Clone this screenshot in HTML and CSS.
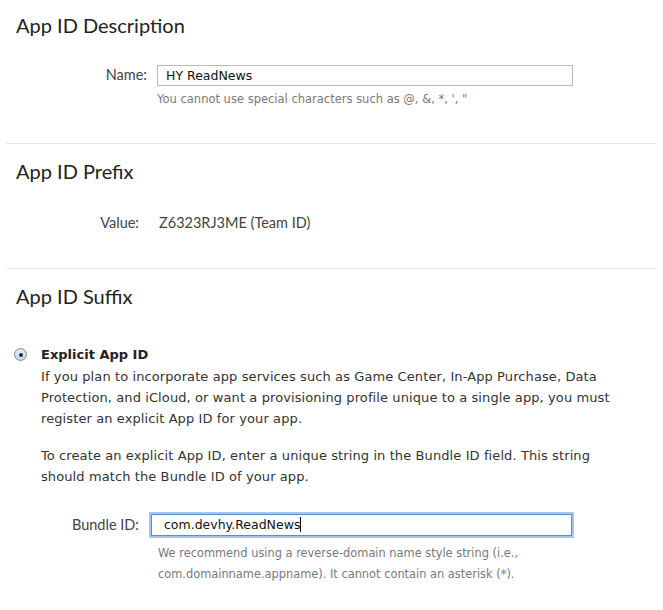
FILE: index.html
```html
<!DOCTYPE html>
<html>
<head>
<meta charset="utf-8">
<link rel="stylesheet" href="styles.css">
</head>
<body>
<div class="page">
  <section class="section s1">
    <h2 class="title">App ID Description</h2>
    <div class="field">
      <label class="label name-label">Name:</label>
      <div class="control">
        <div class="input name-input">HY ReadNews</div>
        <p class="help">You cannot use special characters such as @, &amp;, *, ', "</p>
      </div>
    </div>
  </section>
  <section class="section s2">
    <h2 class="title">App ID Prefix</h2>
    <div class="field value-row">
      <span class="label value-label">Value:</span>
      <span class="value">Z6323RJ3ME (Team ID)</span>
    </div>
  </section>
  <section class="section s3 last">
    <h2 class="title">App ID Suffix</h2>
    <div class="option">
      <span class="radio"><span class="dot"></span></span>
      <div class="option-body">
        <div class="option-title">Explicit App ID</div>
        <p class="para">If you plan to incorporate app services such as Game Center, In-App Purchase, Data Protection, and iCloud, or want a provisioning profile unique to a single app, you must register an explicit App ID for your app.</p>
        <p class="para">To create an explicit App ID, enter a unique string in the Bundle ID field. This string should match the Bundle ID of your app.</p>
        <div class="field bundle">
          <label class="label bundle-label">Bundle ID:</label>
          <div class="control">
            <div class="input bundle-input">com.devhy.ReadNews<span class="caret"></span></div>
            <p class="help help2">We recommend using a reverse-domain name style string (i.e., com.domainname.appname). It cannot contain an asterisk (*).</p>
          </div>
        </div>
      </div>
    </div>
  </section>
</div>
</body>
</html>
```
FILE: styles.css
```css
html, body { margin: 0; padding: 0; background: #fff; }
body { width: 663px; height: 610px; overflow: hidden; color: #333; font-family: "DejaVu Sans", sans-serif; }
.page { padding: 0 8px 0 6px; }
.section { border-bottom: 1px solid #e4e4e4; }
.section.last { border-bottom: none; }
.title { margin: 0; padding-left: 10px; font-family: "Lato", sans-serif; font-weight: 400; font-size: 20px; line-height: 24px; color: #222; }
.s1 .title { padding-top: 13px; }
.s2 .title { padding-top: 15px; }
.s3 .title { padding-top: 15px; }
.s1 { height: 143px; }
.s2 { height: 124px; }
.field { display: flex; align-items: flex-start; }
.label { font-family: "Lato", sans-serif; font-size: 14.5px; color: #444; text-align: right; }
.s1 .field { margin-top: 28px; }
.name-label { width: 141px; line-height: 19px; padding-right: 10px; }
.control { display: flex; flex-direction: column; }
.input { box-sizing: border-box; border: 1px solid #b9b9b9; background: #fff; font-size: 12.5px; color: #111; padding: 0 8px; }
.name-input { width: 416px; height: 21px; line-height: 19px; }
.help { margin: 0; font-size: 11.5px; color: #7a7a7a; line-height: 21px; padding-top: 3px; }
.value-row { margin-top: 30px; }
.value-label { width: 133px; padding-right: 20px; line-height: 20px; }
.value { font-family: "Lato", sans-serif; font-size: 14.5px; color: #444; line-height: 20px; }
.option { display: flex; margin-top: 35px; padding-left: 8px; }
.radio { box-sizing: border-box; width: 13px; height: 13px; border-radius: 50%; border: 1px solid #7d8fa8; background: radial-gradient(circle at 50% 35%, #eaf2fb, #b8cce4); margin-top: 5px; margin-right: 14px; display: flex; align-items: center; justify-content: center; flex: none; }
.dot { width: 4px; height: 4px; border-radius: 50%; background: #1c2a3c; }
.option-body { width: 595px; }
.option-title { font-weight: bold; font-size: 13px; line-height: 23px; color: #222; }
.para { margin: 0 0 16px 0; font-size: 13px; letter-spacing: 0.1px; line-height: 21px; color: #333; }
.bundle { margin-top: 27px; margin-left: 0; }
.bundle-label { width: 98px; line-height: 22px; padding-right: 12px; }
.bundle-input { width: 421px; height: 22px; line-height: 20px; border: 1px solid #5f8cc4; box-shadow: 0 0 0 2px #a9c6ea; padding-left: 12px; }
.caret { display: inline-block; width: 1px; height: 15px; background: #000; vertical-align: -3px; }
.help2 { width: 430px; margin-left: 7px; font-size: 11.4px; padding-top: 7px; }
```
